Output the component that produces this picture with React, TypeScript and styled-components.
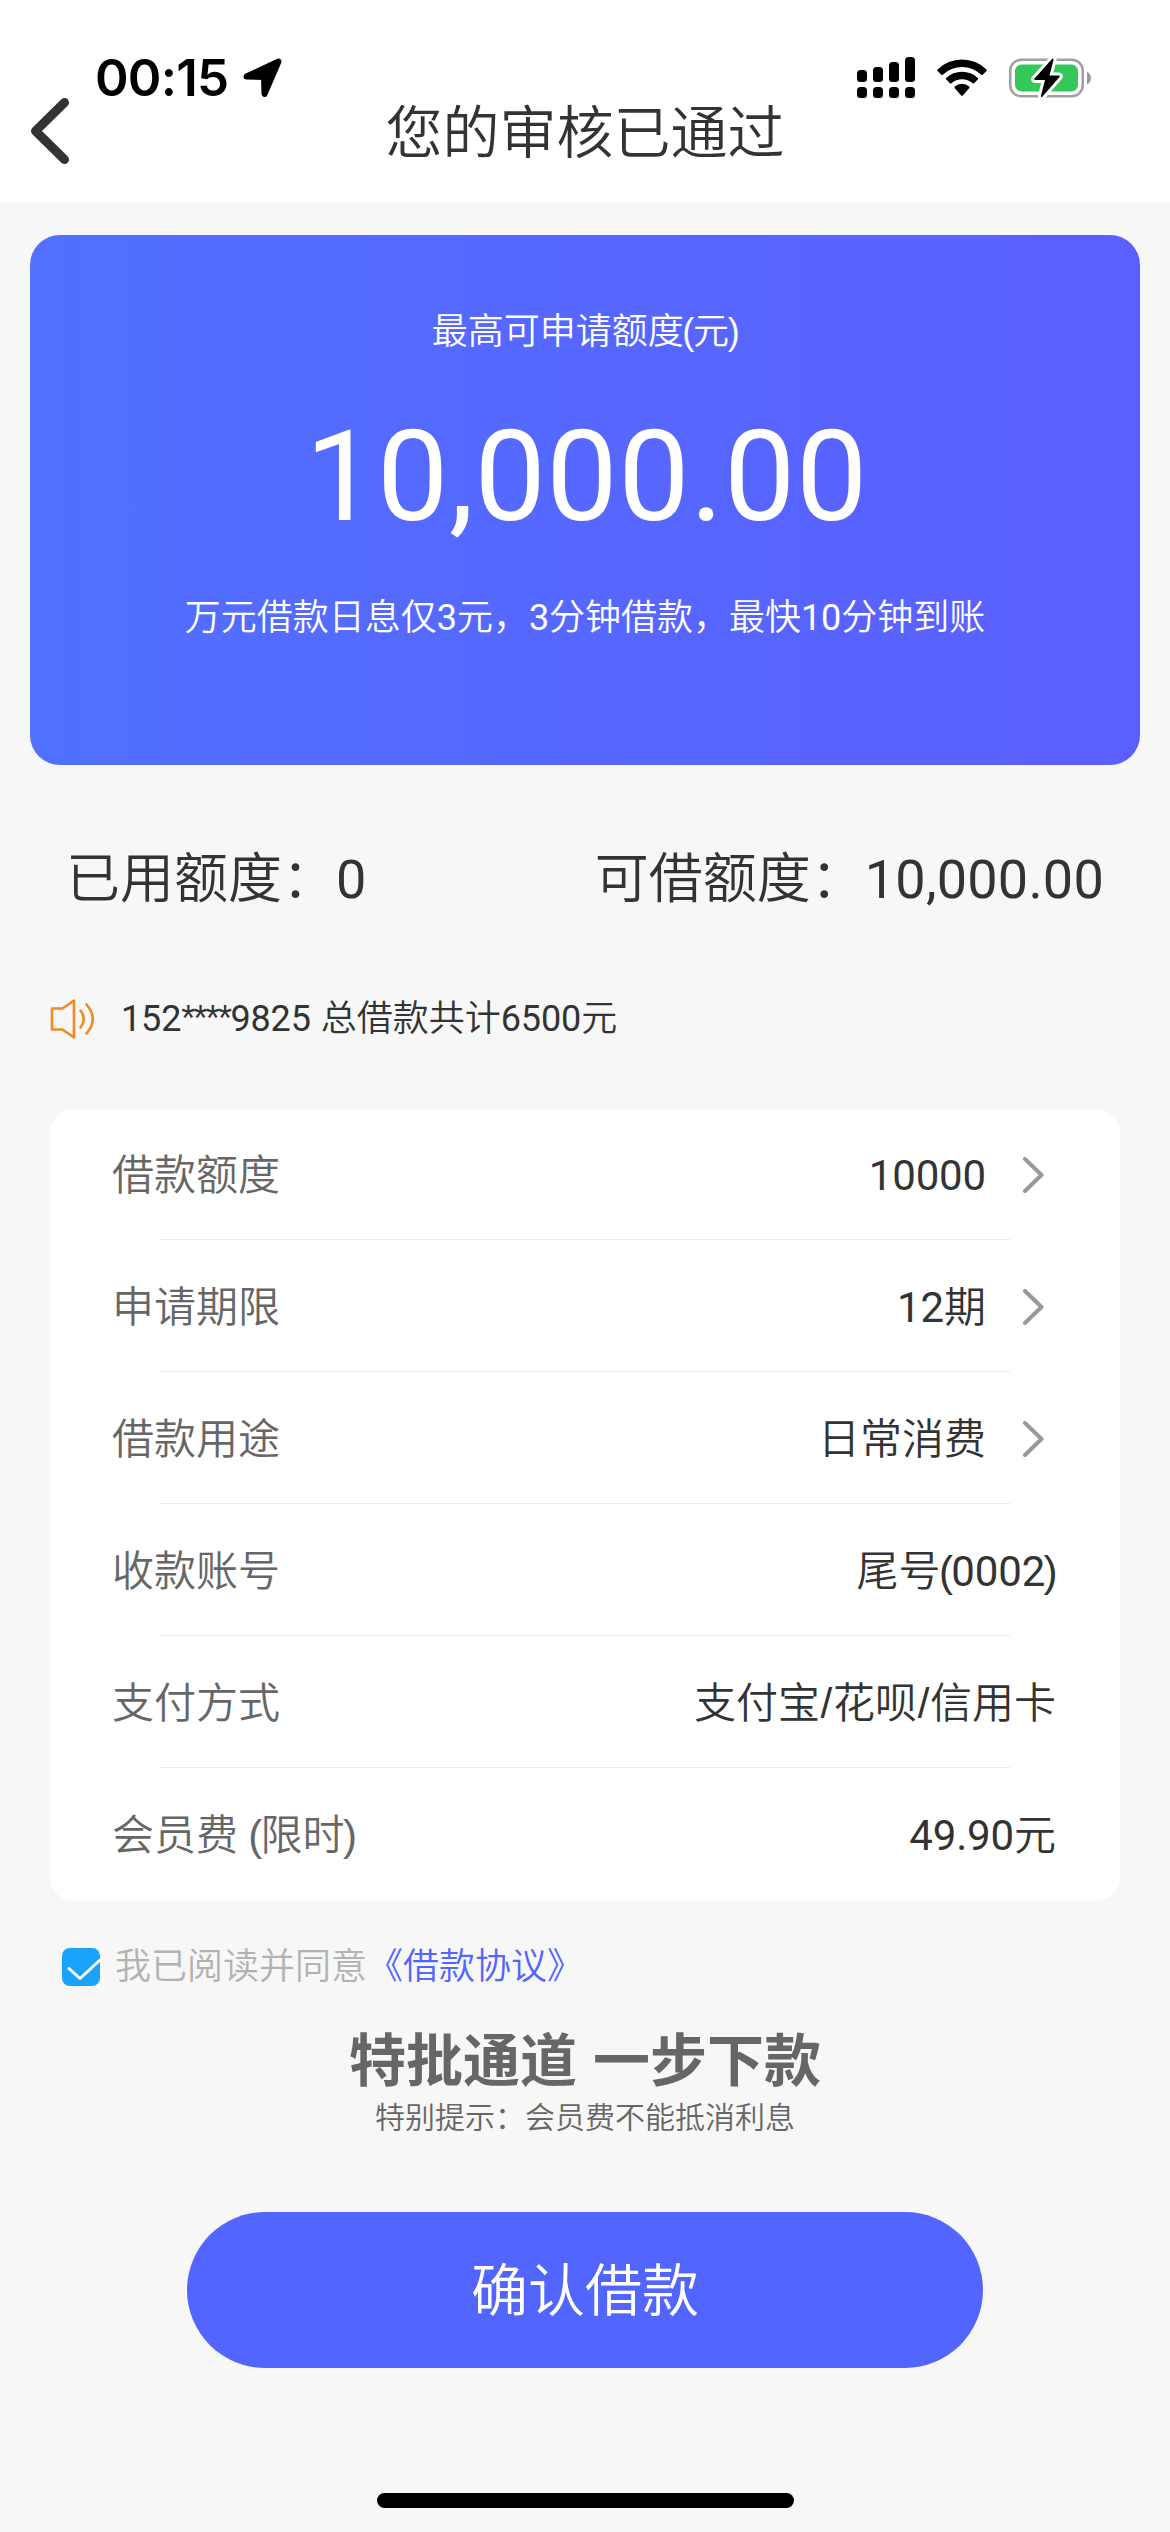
import React from "react";
import type { ReactNode } from "react";
import styled, { createGlobalStyle } from "styled-components";

const GlobalStyle = createGlobalStyle`
  * { box-sizing: border-box; }
  body {
    margin: 0;
    background: #f7f7f7;
    font-family: "Liberation Sans", "Noto Sans CJK SC", sans-serif;
    color: #333;
  }
`;

const Screen = styled.div`
  width: 1170px;
  height: 2532px;
  display: flex;
  flex-direction: column;
  overflow: hidden;
  background: #f7f7f7;
  font-weight: 350;
`;

const Num = styled.span<{ $tight?: number }>`
  font-family: Roboto, "Liberation Sans", sans-serif;
  font-weight: 400;
  letter-spacing: ${(p) => p.$tight ?? -0.004}em;
`;

const Paren = styled.span`
  margin: 0 -0.037em;
`;

const Slash = styled.span`
  margin: 0 0.016em;
`;

const Mask = styled.span`
  letter-spacing: -0.048em;
`;

const Header = styled.header`
  height: 203px;
  background: #fff;
`;

const StatusBar = styled.div`
  height: 96px;
  padding: 60px 79px 0 95px;
  display: flex;
  justify-content: space-between;
  align-items: center;
`;

const StatusGroup = styled.div<{ $gap: number }>`
  display: flex;
  align-items: center;
  gap: ${(p) => p.$gap}px;
  height: 36px;
`;

const Clock = styled.span`
  font-family: Inter, sans-serif;
  font-weight: 600;
  font-size: 51px;
  line-height: 36px;
  width: 133px;
  letter-spacing: -0.8px;
  white-space: nowrap;
  color: #000;
`;

const NavBar = styled.div`
  display: grid;
  grid-template-columns: 120px 1fr 120px;
  align-items: center;
  height: 66px;
`;

const BackButton = styled.button`
  display: flex;
  padding: 2px 0 0 30px;
  border: 0;
  background: none;
`;

const Title = styled.h1`
  margin: 0;
  padding-top: 6px;
  text-align: center;
  font-size: 57px;
  font-weight: 350;
  line-height: 60px;
`;

const QuotaCard = styled.section`
  height: 530px;
  margin: 32px 30px 0;
  padding-top: 71px;
  border-radius: 30px;
  background: linear-gradient(90deg, #5170ff, #5b5fff);
  color: #fff;
  text-align: center;
`;

const QuotaText = styled.p`
  margin: 0;
  height: 52px;
  font-size: 36px;
  line-height: 52px;
`;

const QuotaAmount = styled.p`
  margin: 45px 0 41px;
  padding-left: 3px;
  font-family: Roboto, "Liberation Sans", sans-serif;
  font-size: 127px;
  font-weight: 400;
  line-height: 148px;
  letter-spacing: 0.004em;
`;

const Stats = styled.div`
  display: flex;
  justify-content: space-between;
  height: 80px;
  margin: 74px 66px 0;
  font-size: 54px;
  line-height: 80px;
  white-space: nowrap;
`;

const Notice = styled.div`
  display: flex;
  align-items: center;
  gap: 25px;
  margin: 73px 50px 0;
  padding-top: 1px;
  height: 52px;
  font-size: 36px;
  line-height: 52px;
  white-space: nowrap;
`;

const Panel = styled.section`
  margin: 65px 50px 0;
  border-radius: 24px;
  background: #fff;
`;

const Row = styled.div`
  height: 132px;
  padding: 2px 64px 0 62px;
  display: flex;
  justify-content: space-between;
  align-items: center;
  font-size: 42px;
  line-height: 60px;
  white-space: nowrap;
  background: linear-gradient(#ebebeb, #ebebeb) 110px 130px / 850px 1px no-repeat;

  &:last-child { background: none; }
`;

const RowLabel = styled.span`
  color: #666;
`;

const RowValue = styled.span<{ $link: boolean }>`
  display: flex;
  align-items: center;
  gap: 36px;
  padding-right: ${(p) => (p.$link ? 12 : 0)}px;
`;

const Agreement = styled.label`
  display: flex;
  align-items: center;
  margin: 40px 62px 0;
  height: 52px;
  font-size: 36px;
  line-height: 52px;
  color: #b2b2b2;
`;

const CheckBox = styled.span`
  display: flex;
  width: 38px;
  height: 38px;
  margin-right: 15px;
  border-radius: 8px;
  background: #1aa3fb;
`;

const AgreementLink = styled.a`
  color: #5266ff;
`;

const Promo = styled.h2`
  margin: 26px 0 0;
  text-align: center;
  font-size: 57px;
  font-weight: 600;
  line-height: 84px;
  color: #666;
`;

const Hint = styled.p`
  margin: -7px 0 0;
  text-align: center;
  font-size: 30px;
  line-height: 44px;
  color: #666;
`;

const ConfirmButton = styled.button`
  width: 796px;
  height: 156px;
  margin: 72px auto 0;
  padding: 0 0 8px;
  border: 0;
  border-radius: 78px;
  background: #5266ff;
  color: #fff;
  font-family: inherit;
  font-size: 57px;
  font-weight: 350;
`;

const HomeIndicator = styled.div`
  width: 417px;
  height: 15px;
  margin: auto auto 24px;
  border-radius: 8px;
  background: #000;
`;

const LocationIcon = () => (
  <svg width="40" height="40" viewBox="0 0 40 40">
    <path d="M3.5 18.5 35.5 3.5 21.5 36 21 19Z" fill="#000" stroke="#000" strokeWidth="6" strokeLinejoin="round" />
  </svg>
);

const SignalIcon = () => (
  <svg width="58" height="42" viewBox="0 0 58 42">
    {[13, 10, 5, 0].map((top, i) => (
      <g key={top}>
        <rect x={i * 16} y={top} width="10" height={25 - top} rx="3.5" />
        <rect x={i * 16} y="30" width="10" height="11" rx="3.5" />
      </g>
    ))}
  </svg>
);

const WifiIcon = () => (
  <svg width="50" height="38" viewBox="0 0 50 38">
    <path d="M0.6 10.4a35 35 0 0 1 48.8 0q.8.8 0 1.6l-3.7 3.7q-.7.7-1.5 0a28 28 0 0 0-38.4 0q-.8.7-1.5 0l-3.7-3.7q-.8-.8 0-1.6Z" />
    <path d="M9.2 19a23 23 0 0 1 31.6 0q.8.8 0 1.6l-3.7 3.7q-.8.7-1.5 0a15.8 15.8 0 0 0-21.2 0q-.7.7-1.5 0l-3.7-3.7q-.8-.8 0-1.6Z" />
    <path d="M17.8 27.6a10.8 10.8 0 0 1 14.4 0q.8.8 0 1.6l-6.4 7.2q-.8.8-1.6 0l-6.4-7.2q-.8-.8 0-1.6Z" />
  </svg>
);

const BatteryIcon = () => (
  <svg width="82" height="43" viewBox="0 0 82 43">
    <rect x="1.25" y="2.75" width="72.5" height="36.5" rx="11" fill="none" stroke="#a0a0a0" strokeWidth="2.5" />
    <path d="M78 14.500q4 2.500 4 6.500t-4 6.500Z" fill="#999" />
    <rect x="6" y="7.500" width="63" height="27" rx="6.500" fill="#34c759" />
    <path
      d="M43 2 25.500 21.500q-1 1.500.8 1.500h9.700L32 38.500q-.3 2.500 1.500 1L50.500 20q1-1.500-.8-1.500H40.500L44.500 3q.3-2.500-1.500-1Z"
      fill="#000"
      stroke="#fff"
      strokeWidth="6"
      strokeLinejoin="round"
      paintOrder="stroke"
    />
  </svg>
);

const BackIcon = () => (
  <svg width="39" height="66" viewBox="0 0 39 66" fill="none">
    <path d="M34.500 4.500 5.500 33l29 28.500" stroke="#333" strokeWidth="9" strokeLinecap="round" strokeLinejoin="round" />
  </svg>
);

const SpeakerIcon = () => (
  <svg width="46" height="42" viewBox="0 0 46 42" fill="none" stroke="#f08a24" strokeWidth="2.600" strokeLinejoin="round" strokeLinecap="round">
    <path d="M2 10.500h10.500L24 2.500v37L12.500 31.500H2Z" />
    <path d="M30.500 12.500q6.500 8.500 0 17M36.500 6.500q12.500 14.500 0 29" />
  </svg>
);

const ChevronIcon = () => (
  <svg width="22" height="38" viewBox="0 0 22 38" fill="none">
    <path d="M3 2 19.500 18 3 34" stroke="#999" strokeWidth="4" strokeLinecap="round" strokeLinejoin="round" />
  </svg>
);

const TickIcon = () => (
  <svg width="38" height="38" viewBox="0 0 38 38" fill="none">
    <path d="M7 20.500 18 30.500 37.500 12.500" stroke="#fff" strokeWidth="3" strokeLinecap="round" strokeLinejoin="round" />
  </svg>
);

const rows: { label: ReactNode; value: ReactNode; link: boolean }[] = [
  { label: "借款额度", value: <Num>10000</Num>, link: true },
  { label: "申请期限", value: <span><Num>12</Num>期</span>, link: true },
  { label: "借款用途", value: "日常消费", link: true },
  {
    label: "收款账号",
    value: <span>尾号<Paren>(</Paren><Num>0002</Num><Paren>)</Paren></span>,
    link: false,
  },
  {
    label: "支付方式",
    value: <span>支付宝<Slash>/</Slash>花呗<Slash>/</Slash>信用卡</span>,
    link: false,
  },
  {
    label: <>会员费 <Paren>(</Paren>限时<Paren>)</Paren></>,
    value: <span><Num>49.90</Num>元</span>,
    link: false,
  },
];

export default function App() {
  return (
    <Screen lang="zh-CN">
      <GlobalStyle />
      <Header>
        <StatusBar>
          <StatusGroup $gap={15}>
            <Clock>00:15</Clock>
            <LocationIcon />
          </StatusGroup>
          <StatusGroup $gap={22}>
            <SignalIcon />
            <WifiIcon />
            <BatteryIcon />
          </StatusGroup>
        </StatusBar>
        <NavBar>
          <BackButton aria-label="返回">
            <BackIcon />
          </BackButton>
          <Title>您的审核已通过</Title>
        </NavBar>
      </Header>
      <QuotaCard>
        <QuotaText>最高可申请额度<Paren>(</Paren>元<Paren>)</Paren></QuotaText>
        <QuotaAmount>10,000.00</QuotaAmount>
        <QuotaText>万元借款日息仅<Num>3</Num>元，<Num>3</Num>分钟借款，最快<Num>10</Num>分钟到账</QuotaText>
      </QuotaCard>
      <Stats>
        <span>已用额度：<Num>0</Num></span>
        <span>可借额度：<Num $tight={0.004}>10,000.00</Num></span>
      </Stats>
      <Notice>
        <SpeakerIcon />
        <span><Num>152</Num><Mask>****</Mask><Num>9825</Num> 总借款共计<Num>6500</Num>元</span>
      </Notice>
      <Panel>
        {rows.map((row, index) => (
          <Row key={index}>
            <RowLabel>{row.label}</RowLabel>
            <RowValue $link={row.link}>
              {row.value}
              {row.link && <ChevronIcon />}
            </RowValue>
          </Row>
        ))}
      </Panel>
      <Agreement>
        <CheckBox>
          <TickIcon />
        </CheckBox>
        我已阅读并同意<AgreementLink>《借款协议》</AgreementLink>
      </Agreement>
      <Promo>特批通道 一步下款</Promo>
      <Hint>特别提示：会员费不能抵消利息</Hint>
      <ConfirmButton>确认借款</ConfirmButton>
      <HomeIndicator />
    </Screen>
  );
}
